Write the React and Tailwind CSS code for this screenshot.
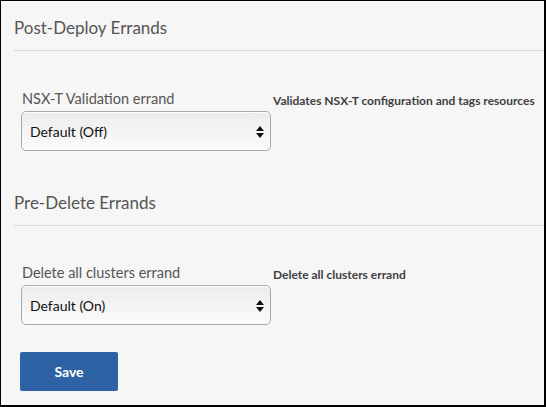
const fontStack = { fontFamily: "Lato, 'Open Sans', sans-serif" };

function SelectBox({ value }) {
  return (
    <div className="relative flex h-[40px] w-[250px] items-center rounded-[5px] border border-[#a9a9a9] bg-gradient-to-b from-[#ececec] to-[#fbfbfb] pl-[8px] text-[14px] text-[#111] shadow-[inset_0_1px_0_#fff]">
      {value}
      <svg className="absolute right-[6px] top-[14px]" width="8" height="12" viewBox="0 0 8 12">
        <path d="M4 0 L8 5 L0 5 Z" fill="#111" />
        <path d="M0 7 L8 7 L4 12 Z" fill="#111" />
      </svg>
    </div>
  );
}

function ErrandRow({ label, value, description }) {
  return (
    <div className="flex pl-[20px]">
      <div className="flex flex-col">
        <span className="mb-[3px] pl-[1px] text-[14.5px] leading-[18px] text-[#555]">{label}</span>
        <SelectBox value={value} />
      </div>
      <span className="ml-[2px] mt-[3px] whitespace-nowrap text-[12px] font-bold leading-[16px] text-[#3f3f3f]">
        {description}
      </span>
    </div>
  );
}

function SectionTitle({ children }) {
  return (
    <div>
      <h2 className="pl-[13px] text-[17px] leading-[22px] text-[#555]">{children}</h2>
      <div className="ml-[13px] mt-[11px] h-px bg-[#d9d9d9]" />
    </div>
  );
}

export default function App() {
  return (
    <div
      className="flex h-[407px] w-[546px] flex-col border-t border-l border-r-2 border-b-2 border-black bg-[#f6f6f6]"
      style={fontStack}
    >
      <div className="pt-[16px]">
        <SectionTitle>Post-Deploy Errands</SectionTitle>
      </div>
      <div className="mt-[39px]">
        <ErrandRow
          label="NSX-T Validation errand"
          value="Default (Off)"
          description="Validates NSX-T configuration and tags resources"
        />
      </div>
      <div className="mt-[41px]">
        <SectionTitle>Pre-Delete Errands</SectionTitle>
      </div>
      <div className="mt-[38px]">
        <ErrandRow
          label="Delete all clusters errand"
          value="Default (On)"
          description="Delete all clusters errand"
        />
      </div>
      <div className="mt-[27px] pl-[19px]">
        <button className="h-[39px] w-[98px] rounded-[2px] bg-[#2d63a5] text-[14px] font-bold text-white">
          Save
        </button>
      </div>
    </div>
  );
}
